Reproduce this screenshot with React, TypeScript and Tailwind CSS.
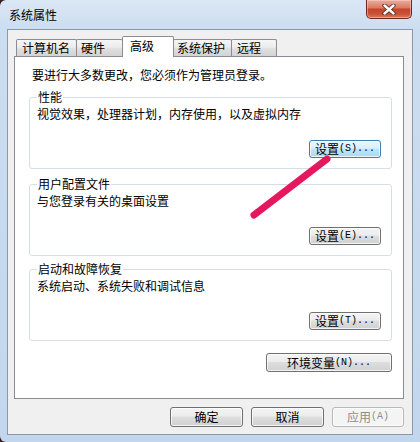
import React from "react";

type Kind = "normal" | "hot" | "off";

function WinButton({
  cjk,
  ascii,
  kind = "normal",
  className = "",
}: {
  cjk: string;
  ascii?: string;
  kind?: Kind;
  className?: string;
}) {
  const skin =
    kind === "hot"
      ? "border-[#3c7fb1] bg-[linear-gradient(to_bottom,#eaf6fd_0%,#d9f0fc_45%,#bee6fd_50%,#a7d9f5_100%)] text-black"
      : kind === "off"
      ? "border-[#b5b9bc] bg-[#f4f4f4] text-[#8d8d8d]"
      : "border-[#707070] bg-[linear-gradient(to_bottom,#f4f4f4_0%,#ececec_45%,#dedede_50%,#d0d0d0_100%)] text-black";
  return (
    <div
      className={`flex items-center justify-center rounded-[3px] border text-[12px] leading-none shadow-[inset_0_0_0_1px_rgba(255,255,255,0.75)] ${skin} ${className}`}
    >
      <span>{cjk}</span>
      {ascii && (
        <span className="font-['Liberation_Mono',monospace] text-[10px]">{ascii}</span>
      )}
    </div>
  );
}

function Tab({
  label,
  active = false,
  className = "",
}: {
  label: string;
  active?: boolean;
  className?: string;
}) {
  if (active) {
    return (
      <div
        className={`relative z-10 -mb-px -ml-px flex h-[21px] items-start rounded-t-[2px] border border-b-0 border-[#898c95] bg-white pt-px text-[12px] leading-[16px] ${className}`}
      >
        {label}
      </div>
    );
  }
  return (
    <div
      className={`-ml-px flex h-[17px] items-start rounded-t-[2px] border border-b-0 border-[#898c95] bg-[linear-gradient(to_bottom,#f6f6f6_0%,#ececec_45%,#dfdfdf_55%,#d3d3d3_100%)] text-[12px] leading-[16px] first:ml-0 ${className}`}
    >
      {label}
    </div>
  );
}

function GroupBox({
  title,
  text,
  button,
  className = "",
}: {
  title: string;
  text: string;
  button: React.ReactNode;
  className?: string;
}) {
  return (
    <div
      className={`relative ml-[14px] flex h-[72px] w-[363px] flex-col rounded-[3px] border border-[#d5dfe5] ${className}`}
    >
      <span className="absolute left-[7px] top-[-9px] bg-white px-px leading-[16px]">
        {title}
      </span>
      <div className="pl-[7px] pt-[8px] leading-[16px]">{text}</div>
      <div className="mb-[10px] mr-[10px] mt-auto self-end">{button}</div>
    </div>
  );
}

export default function App() {
  return (
    <div className="relative h-[442px] w-[420px] overflow-hidden bg-[#3a1c20] font-['Noto_Sans_CJK_SC',sans-serif] text-[12px] text-black">
      <div className="flex h-full flex-col rounded-l-[6px] bg-[linear-gradient(to_bottom,#dbe7f5_0px,#cbddf0_30px,#c2d7ee_100%)]">
        {/* title bar */}
        <div className="flex h-[29px] shrink-0 items-start">
          <div className="pl-[9px] pt-[7px] leading-[16px]">系统属性</div>
          <div className="ml-auto mr-[8px] flex h-[19px] w-[46px] items-center justify-center rounded-b-[5px] border border-t-0 border-[#6b2a20] bg-[linear-gradient(to_bottom,#e9ad9f_0%,#dc7b64_42%,#c4452a_52%,#c9513a_78%,#de7a5f_100%)] shadow-[inset_0_0_0_1px_rgba(255,220,210,0.45)]">
            <svg width="14" height="11" viewBox="0 0 14 11">
              <path d="M2.5 1.5 L11.5 9.5 M11.5 1.5 L2.5 9.5" stroke="#5a2a24" strokeWidth="4.2" strokeLinecap="round" />
              <path d="M2.5 1.5 L11.5 9.5 M11.5 1.5 L2.5 9.5" stroke="#ffffff" strokeWidth="2.4" strokeLinecap="round" />
            </svg>
          </div>
        </div>

        {/* client area */}
        <div className="ml-[7px] flex h-[406px] w-[406px] flex-col border border-[#8a99aa] bg-[#f0f0f0]">
          <div className="ml-[8px] mt-[6px] flex h-[20px] items-end">
            <Tab label="计算机名" className="w-[61px] pl-[5px]" />
            <Tab label="硬件" className="w-[47px] pl-[4px]" />
            <Tab label="高级" active className="w-[52px] pl-[7px]" />
            <Tab label="系统保护" className="w-[59px] pl-[3px]" />
            <Tab label="远程" className="w-[46px] pl-[5px]" />
          </div>

          <div className="ml-[6px] flex h-[343px] w-[390px] flex-col border border-[#898c95] bg-white">
            <div className="ml-[17px] mt-[10px] leading-[16px]">
              要进行大多数更改，您必须作为管理员登录。
            </div>

            <GroupBox
              className="mt-[14px]"
              title="性能"
              text="视觉效果，处理器计划，内存使用，以及虚拟内存"
              button={<WinButton cjk="设置" ascii="(S)..." kind="hot" className="h-[18px] w-[72px]" />}
            />
            <GroupBox
              className="mt-[15px]"
              title="用户配置文件"
              text="与您登录有关的桌面设置"
              button={<WinButton cjk="设置" ascii="(E)..." className="h-[18px] w-[72px]" />}
            />
            <GroupBox
              className="mt-[13px]"
              title="启动和故障恢复"
              text="系统启动、系统失败和调试信息"
              button={<WinButton cjk="设置" ascii="(T)..." className="h-[18px] w-[72px]" />}
            />

            <div className="mr-[11px] mt-[12px] self-end">
              <WinButton cjk="环境变量" ascii="(N)..." className="h-[19px] w-[126px]" />
            </div>
          </div>

          <div className="mr-[8px] mt-[8px] flex justify-end gap-[8px]">
            <WinButton cjk="确定" className="h-[20px] w-[73px]" />
            <WinButton cjk="取消" className="h-[20px] w-[73px]" />
            <WinButton cjk="应用" ascii="(A)" kind="off" className="h-[20px] w-[72px]" />
          </div>
        </div>
      </div>

      {/* annotation stroke drawn over the screenshot */}
      <svg className="pointer-events-none absolute inset-0" width="420" height="442">
        <line x1="327" y1="159" x2="254" y2="215" stroke="#e4185d" strokeWidth="7" strokeLinecap="round" />
      </svg>
    </div>
  );
}
